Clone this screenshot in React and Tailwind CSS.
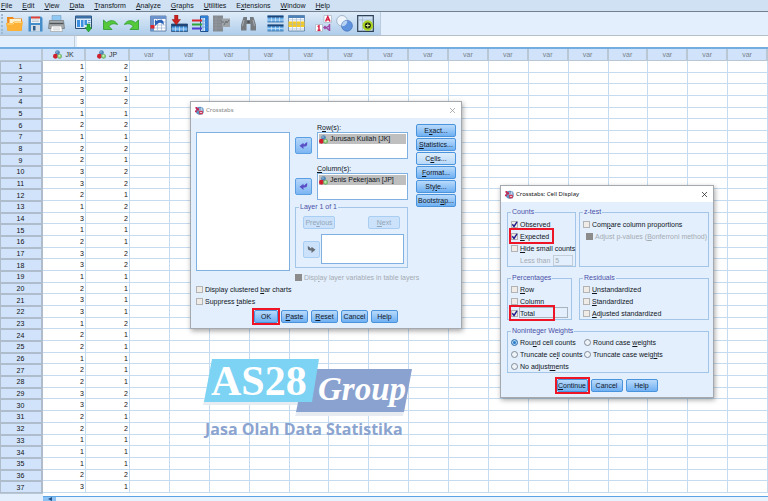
import React, { useState } from "react";
import { X } from "lucide-react";

const MENUS = [
  "&File", "&Edit", "&View", "&Data", "&Transform", "&Analyze",
  "&Graphs", "&Utilities", "E&xtensions", "&Window", "&Help",
];

// [JK, JP] for every case
const CASES = [
  [1, 2], [2, 1], [3, 2], [3, 2], [1, 1], [2, 2], [1, 1], [2, 2], [2, 1], [3, 2],
  [3, 2], [2, 1], [1, 2], [3, 2], [1, 1], [2, 1], [3, 2], [3, 2], [1, 1], [2, 1],
  [3, 1], [3, 1], [1, 2], [2, 1], [2, 1], [1, 1], [2, 1], [2, 1], [3, 2], [3, 2],
  [2, 1], [2, 2], [1, 1], [1, 1], [1, 1], [2, 2], [3, 1],
];

const EMPTY_VARS = Array.from({ length: 16 }, (_, i) => i);

// "&" marks the letter that gets the keyboard underline
function Mnemonic({ text }) {
  const at = text.indexOf("&");
  if (at < 0) return <span>{text}</span>;
  return (
    <span className="whitespace-nowrap">
      {text.slice(0, at)}
      <span className="underline">{text[at + 1]}</span>
      {text.slice(at + 2)}
    </span>
  );
}

function NominalIcon() {
  return (
    <svg viewBox="0 0 10 10" className="w-[9px] h-[9px] shrink-0">
      <circle cx="5" cy="2.8" r="2.6" fill="#4f86b8" />
      <circle cx="2.7" cy="7" r="2.7" fill="#d0202e" />
      <circle cx="7.3" cy="7" r="2.4" fill="#8fd07c" stroke="#4c9440" strokeWidth=".5" />
      <circle cx="4.4" cy="2.2" r=".9" fill="#a9cbe6" />
      <circle cx="7" cy="6.5" r="1" fill="#d4f5c6" />
    </svg>
  );
}

function AppIcon() {
  return (
    <svg viewBox="0 0 10 10" className="w-[9px] h-[9px] shrink-0">
      <circle cx="5.4" cy="5.2" r="4.5" fill="#5f93c4" />
      <path d="M3.5 3.4h6M4 5.2h5.600M7.200 1.500v4" stroke="#dcebf8" strokeWidth=".7" />
      <path d="M.5 1h2v2h-2zM1.500 2.500h3v2.500h-3zM0 5h2v2H0z" fill="#cc2452" />
      <path d="M4.600 5.300h4V9.200h-4z" fill="#cf3450" />
      <path d="M5.500 7.200h2.300" stroke="#fff" strokeWidth=".8" />
    </svg>
  );
}

const TOOL_GROUPS = [
  [
    {
      name: "Open",
      art: (
        <>
          <path d="M1 2h6l1 1.500h8v12H1.500z" fill="#ee8a18" />
          <path d="M3.500 4h11.500v6H3.500z" fill="#fff3cf" />
          <path d="M0 8h6.500l1.500-1.500H17L15.500 16h-14z" fill="#fdb235" />
          <path d="M1.500 9h5.500l1.500-1.500h7" stroke="#ffdf95" fill="none" strokeWidth=".9" />
        </>
      ),
    },
    {
      name: "Save",
      art: (
        <>
          <path d="M1.500 1.500h12.500l1.500 1.500v13.500h-14z" fill="#458dc8" />
          <path d="M4 1.500h9v6.500H4z" fill="#eef2f6" />
          <path d="M4 1.500h9v2H4z" fill="#dd4038" />
          <path d="M5 5h7M5 6.500h7" stroke="#a9b6c2" strokeWidth=".6" />
          <path d="M4 10h9v6.500H4z" fill="#d3dce5" />
          <path d="M6 11h2.500v4.500H6z" fill="#2f5f8c" />
        </>
      ),
    },
    {
      name: "Print",
      art: (
        <>
          <path d="M4 .500h9V7H4z" fill="#8fc8f2" stroke="#6c93b4" strokeWidth=".5" />
          <path d="M1.500 5.500h14l1 8H.500z" fill="#a6aaae" stroke="#6d7276" strokeWidth=".7" />
          <path d="M1.500 8.500h14" stroke="#4f5458" strokeWidth="1.400" />
          <path d="M3.500 11h10l1 5.500h-12z" fill="#fcfcfc" stroke="#888" strokeWidth=".5" />
          <path d="M5 13h7M5 14.800h7" stroke="#b5b9bd" strokeWidth=".6" />
        </>
      ),
    },
  ],
  [
    {
      name: "Recall dialog",
      art: (
        <>
          <path d="M.500 1h16v12.500H.500z" fill="#dcebf8" stroke="#2c4e75" strokeWidth="1" />
          <path d="M.500 1h16v2.500H.500z" fill="#3b6ea5" />
          <path d="M2 5h3v7H2zM6 5h2.500v7H6zM9.500 5H12v5H9.500z" fill="#3d8fe0" />
          <path d="M13 5.500h2.500M13 7.500h2.500" stroke="#6a9fd0" />
          <path d="M12 9h3v3.500h2L13.500 17 10 12.500h2z" fill="#2fb536" stroke="#1c7d24" strokeWidth=".5" />
        </>
      ),
    },
  ],
  [
    {
      name: "Undo",
      art: <path d="M1.500 5v9.500H10L7 11.500C8.500 9 11.500 8 15.500 9.500 13.500 5 8 4.500 4.500 7.700z" fill="#55c93a" stroke="#2a9a2a" strokeWidth=".8" />,
    },
    {
      name: "Redo",
      art: <path d="M15.500 5v9.500H7L10 11.500C8.500 9 5.500 8 1.500 9.500 3.500 5 9 4.500 12.500 7.700z" fill="#55c93a" stroke="#2a9a2a" strokeWidth=".8" />,
    },
  ],
  [
    {
      name: "Go to case",
      art: (
        <>
          <path d="M.500 1h15.500v15H.500z" fill="#fff" stroke="#4a6a98" strokeWidth=".8" />
          <path d="M.500 1h15.500v3H.500zM.500 4h3.500v12H.500z" fill="#6c93cc" />
          <path d="M4 7h12M4 10h12M4 13h12M7.500 4v12M11.500 4v12" stroke="#9fb4d2" strokeWidth=".7" />
          <path d="M.500 10h4v3.500h-4z" fill="#d9252b" />
          <path d="M5 4.500V11l2-1.700c2-2.300 5-2.300 6.500.700C15 5 10 3.500 6.800 6z" fill="#2b62b5" />
        </>
      ),
    },
    {
      name: "Go to variable",
      art: (
        <>
          <path d="M.500 9h16v7.500h-16z" fill="#4f9be0" stroke="#2c4e75" strokeWidth=".8" />
          <path d="M.500 9h16v2.500h-16z" fill="#1f4577" />
          <path d="M.500 14h16M4.500 11.500v5M8.500 11.500v5M12.500 11.500v5" stroke="#cfe6fa" strokeWidth=".7" />
          <path d="M3.500 0h3.500v4.500h2.500L5.200 10 1 4.500h2.500z" fill="#c9221f" stroke="#861412" strokeWidth=".4" />
        </>
      ),
    },
    {
      name: "Variables",
      art: (
        <>
          <path d="M8.500 1H16v15.500H8.500z" fill="#cfe6fa" stroke="#1f4f8c" strokeWidth="1" />
          <path d="M8.500 1H16v2H8.500zM13 3h3v13h-3z" fill="#2f7fd6" />
          <path d="M8.500 6H16M8.500 9H16M8.500 12H16M11 3v13" stroke="#5a94d0" strokeWidth=".7" />
          <path d="M0 5.500h10" stroke="#d9252b" strokeWidth="2" />
          <path d="M0 9.500h10" stroke="#33a63a" strokeWidth="2" />
          <path d="M0 13.500h10" stroke="#4b3fd1" strokeWidth="2" />
        </>
      ),
    },
    {
      name: "Run descriptive statistics",
      art: (
        <>
          <path d="M0 .500h10v16H0z" fill="#858a90" />
          <path d="M0 4h10M0 7h10M0 10h10M0 13h10M3 1v15" stroke="#9a9fa5" strokeWidth=".6" />
          <path d="M9 3.500h8V12H9z" fill="#9ea3a8" />
          <path d="M11 10l2-4 1 2 2-3M8 7h3" stroke="#6c7176" fill="none" />
        </>
      ),
    },
  ],
  [
    {
      name: "Find",
      art: (
        <>
          <path d="M3.500 2h3.500v3h3V2h3.500l2.500 8v5.500h-5.500V9h-4v6.500H1V10z" fill="#767b80" />
          <path d="M4 5l-1.500 6M13 5l1.500 6" stroke="#a9afb4" />
          <circle cx="8.500" cy="7" r="1.300" fill="#4d5256" />
        </>
      ),
    },
  ],
  [
    {
      name: "Split file",
      art: (
        <>
          <path d="M.500 .500h16v6.500H.500zM.500 9.500h16V16H.500z" fill="#63abe8" />
          <path d="M.500 1.500h16M.500 10.500h16" stroke="#1f4577" strokeWidth="2" />
          <path d="M.500 5h16M.500 13.500h16M4.500 2.500V7M8.500 2.500V7M12.500 2.500V7M4.500 11.500v5M8.500 11.500v5M12.500 11.500v5" stroke="#d6ebfc" strokeWidth=".7" />
          <path d="M.500 7h16M.500 16h16" stroke="#36699e" strokeWidth=".8" />
        </>
      ),
    },
    {
      name: "Select cases",
      art: (
        <>
          <path d="M.500 .500h16v15.500H.500z" fill="#f3f8fd" stroke="#54779d" strokeWidth=".8" />
          <path d="M.500 .500h16V3H.500z" fill="#4d81b8" />
          <path d="M.500 6.500h16V12H.500z" fill="#f7ca1f" />
          <path d="M.500 9.200h16M.500 14h16M.500 4.800h16M4.500 3v13M8.500 3v13M12.500 3v13" stroke="#a8bbcf" strokeWidth=".6" />
        </>
      ),
    },
  ],
  [
    {
      name: "Value labels",
      art: (
        <>
          <path d="M9 .500h7.500v7H9zM.500 9.500h7v7h-7z" fill="#fff" stroke="#9da9b8" strokeWidth=".6" />
          <path d="M10.600 6.500l2.200-5 2.200 5M11.500 4.900h2.600" stroke="#d81f45" strokeWidth="1.400" fill="none" />
          <path d="M2.600 11.700L4 10.800v4.500M2.500 15.300h3" stroke="#d81f45" strokeWidth="1.400" fill="none" />
          <path d="M14.500 9v7M14.500 10.500l-3 2h-2M11 12.500l3 2.500M10.500 11L9 12.500l1.500 1.500" stroke="#a04aa8" strokeWidth="1.500" fill="none" />
        </>
      ),
    },
    {
      name: "Use variable sets",
      art: (
        <>
          <circle cx="6" cy="5.800" r="5.300" fill="#eef5fc" stroke="#8b9fb8" strokeWidth=".7" />
          <circle cx="11" cy="10.800" r="5.400" fill="#5f93de" stroke="#3f6fb8" strokeWidth=".7" />
          <path d="M11.300 5.500A5.300 5.300 0 0 1 5.700 11.300 5.400 5.400 0 0 1 11.300 5.500z" fill="#b9d3f3" />
        </>
      ),
    },
    {
      name: "Show all variables",
      art: (
        <>
          <path d="M.700 .700h15.600v15.600H.700z" fill="#cfe2f5" stroke="#2f4156" strokeWidth="1.200" />
          <path d="M.700 5h15.600M5.500 .700v15.600" stroke="#8aa2bb" strokeWidth=".5" />
          <circle cx="10.800" cy="10.500" r="5.300" fill="#a9d320" />
          <circle cx="10.800" cy="10.500" r="3" fill="#1c2410" />
          <path d="M10.800 8.500v4M8.800 10.500h4" stroke="#d9f08a" strokeWidth="1" />
        </>
      ),
    },
  ],
];

function DialogButton({ text, className = "", disabled = false }) {
  return (
    <button
      type="button"
      disabled={disabled}
      className={`h-[13px] rounded-[2px] border text-center leading-[10px] whitespace-nowrap ${
        disabled
          ? "border-[#a9cef3] bg-[#cbe2fa] text-[#93a5b8]"
          : "border-[#4a94de] bg-gradient-to-b from-[#b9dafb] to-[#6fb0f2] text-[#10161f]"
      } ${className}`}
    >
      <Mnemonic text={text} />
    </button>
  );
}

function CheckBox({ label, defaultChecked = false, disabled = false, className = "" }) {
  return (
    <label className={`flex h-[12px] items-center gap-[2px] ${disabled ? "text-[#a3abb3]" : ""} ${className}`}>
      <span className="grid shrink-0">
        <input
          type="checkbox"
          defaultChecked={defaultChecked}
          disabled={disabled}
          className="peer [grid-area:1/1] appearance-none w-[7px] h-[7px] border border-[#b3b3b3] bg-[#efece8] disabled:border-[#8c8c8c] disabled:bg-[#8c8c8c]"
        />
        <svg viewBox="0 0 7 7" className="[grid-area:1/1] w-[7px] h-[7px] pointer-events-none invisible peer-checked:visible">
          <path d="M1.300 3.300l1.700 2.200L6 .800" fill="none" stroke="#1c1c8c" strokeWidth="1.400" />
        </svg>
      </span>
      <Mnemonic text={label} />
    </label>
  );
}

function Radio({ label, defaultChecked = false }) {
  return (
    <label className="flex h-[12px] items-center gap-[2px]">
      <input
        type="radio"
        name="weights"
        defaultChecked={defaultChecked}
        className="appearance-none shrink-0 w-[7px] h-[7px] rounded-full border border-[#7f8b97] bg-[#eef3f8] checked:border-[#4a80b4] checked:bg-[#2b7cc9] checked:shadow-[inset_0_0_0_1px_#b5d8f5]"
      />
      <Mnemonic text={label} />
    </label>
  );
}

function Group({ title, className = "", children }) {
  return (
    <fieldset className={`min-w-0 border border-[#a3c5e8] px-[3px] ${className}`}>
      <legend className="px-px leading-[10px] text-[#4a4fa8]">{title}</legend>
      {children}
    </fieldset>
  );
}

function Highlight() {
  return <span className="absolute -inset-[2px] border-2 border-[#ee1526] pointer-events-none" />;
}

function Dialog({ title, active, className, onClose, children }) {
  return (
    <section
      role="dialog"
      aria-label={title}
      className={`absolute border border-[#a3a9af] bg-[#e3effc] shadow-[1px_2px_5px_rgba(0,0,0,0.35)] ${className}`}
    >
      <header className="flex h-[16px] items-center gap-[2px] bg-white pl-[4px] pr-[4px]">
        <AppIcon />
        <h2 className={`flex-1 font-['Noto_Sans','Open_Sans',sans-serif] text-[6px] ${active ? "text-[#111]" : "text-[#858585]"}`}>
          {title}
        </h2>
        <button type="button" aria-label="Close" onClick={onClose}>
          <X className={`w-[9px] h-[9px] ${active ? "text-[#222]" : "text-[#999]"}`} />
        </button>
      </header>
      {children}
    </section>
  );
}

function MoveButton({ disabled = false }) {
  return (
    <button
      type="button"
      aria-label="Move variable"
      disabled={disabled}
      className={`flex w-[17px] h-[17px] shrink-0 items-center justify-center rounded-[2px] border ${
        disabled ? "border-[#a9cef3] bg-[#cbe2fa]" : "border-[#5a9fe4] bg-gradient-to-b from-[#b5d6f9] to-[#7db6f2]"
      }`}
    >
      <svg viewBox="0 0 9 9" className="w-[9px] h-[9px]">
        {disabled ? (
          <path d="M.800 1v2q0 2.500 2.500 2.500H4.500V8L8.500 4.800 4.500 1.800V3.300H3.500Q2.800 3.300 2.800 2.300z" fill="#666d75" />
        ) : (
          <path d="M8.200 1v2q0 2.500-2.500 2.500H4.500V8L.500 4.800 4.500 1.800V3.300h1Q6.200 3.300 6.200 2.300z" fill="#5b4fc7" />
        )}
      </svg>
    </button>
  );
}

function VariableTarget({ label, variable }) {
  return (
    <div>
      <div className="pl-[22px] leading-[9px]"><Mnemonic text={label} /></div>
      <div className="flex items-center gap-[5px]">
        <MoveButton />
        <ul className="flex-1 h-[27px] border border-[#7fb0e2] bg-white p-px">
          <li className="flex items-center gap-[2px] h-[10px] bg-[#bfbfbf] leading-[10px] whitespace-nowrap">
            <NominalIcon />
            {variable}
          </li>
        </ul>
      </div>
    </div>
  );
}

function CrosstabsDialog({ onClose }) {
  return (
    <Dialog title="Crosstabs" className="left-[190px] top-[101px] w-[272px]" onClose={onClose}>
      <div className="px-[5px] pt-[5px] pb-[5px]">
        <div className="flex items-start gap-[5px]">
          <ul aria-label="Variables" className="w-[94px] h-[139px] mt-[9px] border border-[#7fb0e2] bg-white" />
          <div className="w-[113px]">
            <div className="flex flex-col gap-[5px]">
              <VariableTarget label="R&ow(s):" variable="Jurusan Kuliah [JK]" />
              <VariableTarget label="&Column(s):" variable="Jenis Pekerjaan [JP]" />
            </div>
            <Group title="Layer 1 of 1" className="mt-[2px]">
              <div className="flex justify-between px-[4px] pt-[4px]">
                <DialogButton text="Pre&vious" className="w-[32px]" disabled />
                <DialogButton text="&Next" className="w-[32px]" disabled />
              </div>
              <div className="flex items-center gap-px pl-[4px] pt-[5px] pb-[3px]">
                <MoveButton disabled />
                <ul aria-label="Layer variables" className="flex-1 h-[30px] border border-[#7fb0e2] bg-white" />
              </div>
            </Group>
            <CheckBox label="Disp&lay layer variables in table layers" className="mt-[3px]" disabled />
          </div>
          <div className="flex flex-1 flex-col gap-px pt-px pl-[3px]">
            <DialogButton text="E&xact..." />
            <DialogButton text="&Statistics..." />
            <DialogButton text="C&ells..." className="from-[#dcedfd] to-[#b9d9f9]" />
            <DialogButton text="&Format..." />
            <DialogButton text="Sty&le..." />
            <DialogButton text="Bootstr&ap..." />
          </div>
        </div>
        <CheckBox label="Display clustered &bar charts" />
        <CheckBox label="Suppress &tables" />
        <div className="flex justify-center gap-[3px] pt-[3px]">
          <span className="relative flex">
            <DialogButton text="OK" className="w-[24px]" />
            <Highlight />
          </span>
          <DialogButton text="&Paste" className="w-[27px]" />
          <DialogButton text="&Reset" className="w-[27px]" />
          <DialogButton text="Cancel" className="w-[27px]" />
          <DialogButton text="Help" className="w-[27px]" />
        </div>
      </div>
    </Dialog>
  );
}

function CellDisplayDialog({ onClose }) {
  return (
    <Dialog title="Crosstabs: Cell Display" className="left-[500px] top-[185px] w-[214px]" active onClose={onClose}>
      <div className="flex flex-col gap-[6px] pl-[6px] pr-[4px] pt-[5px] pb-[5px]">
        <div className="flex gap-[3px]">
          <Group title="Counts" className="w-[69px] shrink-0 pt-px">
            <CheckBox label="&Observed" defaultChecked />
            <div className="relative w-[41px]">
              <CheckBox label="&Expected" defaultChecked />
              <Highlight />
            </div>
            <CheckBox label="&Hide small counts" />
            <label className="flex h-[12px] items-center gap-[3px] pl-[9px] text-[#a3abb3] whitespace-nowrap">
              Less than
              <input defaultValue="5" disabled className="w-[20px] h-[11px] border border-[#c2cdd8] pl-px" />
            </label>
          </Group>
          <Group title="z-test" className="flex-1 pt-px">
            <CheckBox label="Com&pare column proportions" />
            <CheckBox label="Adjust p-values (&Bonferroni method)" className="pl-[3px]" disabled />
          </Group>
        </div>
        <div className="flex gap-[7px]">
          <Group title="Percentages" className="w-[65px] shrink-0">
            <CheckBox label="&Row" />
            <CheckBox label="&Column" />
            <div className="relative w-[42px]">
              <CheckBox label="&Total" defaultChecked />
              <span className="absolute left-[8px] top-0 w-[49px] h-[11px] border border-[#a9b4bf] pointer-events-none" />
              <Highlight />
            </div>
          </Group>
          <Group title="Residuals" className="flex-1">
            <CheckBox label="&Unstandardized" />
            <CheckBox label="&Standardized" />
            <CheckBox label="&Adjusted standardized" />
          </Group>
        </div>
        <Group title="Noninteger Weights">
          <div className="grid grid-cols-[73px_1fr]">
            <Radio label="Rou&nd cell counts" defaultChecked />
            <Radio label="Round case &weights" />
            <Radio label="Truncate ce&ll counts" />
            <Radio label="Truncate case weig&hts" />
            <Radio label="No adjust&ments" />
          </div>
        </Group>
        <div className="flex justify-center gap-[3px] pr-[2px]">
          <span className="relative flex">
            <DialogButton text="&Continue" className="w-[31px]" />
            <Highlight />
          </span>
          <DialogButton text="Cancel" className="w-[32px]" />
          <DialogButton text="Help" className="w-[32px]" />
        </div>
      </div>
    </Dialog>
  );
}

function Watermark() {
  return (
    <div className="absolute left-[203px] top-[358px] w-[210px] pointer-events-none">
      <svg viewBox="0 0 210 58" className="block w-full">
        <path d="M9 4h106l-9 43H0z" fill="#e6ecf1" />
        <path d="M106 15h102l-8 43H92z" fill="#e6ecf1" />
        <path d="M102 11h107l-8 43H93z" fill="#8aa2cf" />
        <path d="M9 1h107l-7 43H1z" fill="#7dd3f4" />
        <text x="8" y="37" fontFamily="'Liberation Serif', serif" fontWeight="700" fontSize="42" fill="#fff">AS28</text>
        <text x="115" y="42" fontFamily="'Liberation Serif', serif" fontWeight="700" fontStyle="italic" fontSize="33" fill="#fff">Group</text>
      </svg>
      <p className="pl-[2px] font-['Open_Sans','Noto_Sans',sans-serif] text-[16px] leading-[26px] font-bold text-[#8ba4cf] whitespace-nowrap">
        Jasa Olah Data Statistika
      </p>
    </div>
  );
}

function DataGrid() {
  return (
    <table className="w-full h-full table-fixed border-separate border-spacing-0">
      <colgroup>
        <col className="w-[43px]" />
        <col className="w-[43px]" />
        <col className="w-[44px]" />
      </colgroup>
      <thead>
        <tr className="h-[12px] bg-[#d0e3fb] text-[#7b838d]">
          <th className="border-b border-r-2 border-[#b9c6d4] p-0" />
          {["JK", "JP"].map((name) => (
            <th key={name} scope="col" className="border-b border-r-2 border-[#b9c6d4] p-0 font-normal text-[#333]">
              <span className="flex items-center justify-center gap-[3px]">
                <NominalIcon />
                {name}
              </span>
            </th>
          ))}
          {EMPTY_VARS.map((i) => (
            <th key={i} scope="col" className="border-b border-r-2 border-[#b9c6d4] p-0 font-normal">var</th>
          ))}
        </tr>
      </thead>
      <tbody>
        {CASES.map(([jk, jp], row) => (
          <tr key={row} className="text-right text-[#111]">
            <th scope="row" className="border border-[#aebccb] border-r-2 bg-[#d0e3fb] p-0 pr-px text-center font-normal">
              {row + 1}
            </th>
            <td className="border-b border-r border-[#c5dcf0] p-0 pr-px">{jk}</td>
            <td className="border-b border-r border-[#c5dcf0] p-0 pr-px">{jp}</td>
            {EMPTY_VARS.map((i) => (
              <td key={i} className="border-b border-r border-[#c5dcf0] p-0" />
            ))}
          </tr>
        ))}
      </tbody>
    </table>
  );
}

export default function App() {
  const [showCrosstabs, setShowCrosstabs] = useState(true);
  const [showCells, setShowCells] = useState(true);

  return (
    <main className="relative flex flex-col h-screen overflow-hidden bg-white font-['Liberation_Sans',Arial,sans-serif] text-[7px] leading-[9px] text-[#10151c]">
      <nav className="flex items-center gap-[10px] h-[12px] shrink-0 border-b border-[#72808f] bg-[#cfe1f2] pl-px">
        {MENUS.map((menu) => (
          <button key={menu} type="button"><Mnemonic text={menu} /></button>
        ))}
      </nav>

      <div className="flex h-[24px] shrink-0 border-b border-[#b4bfca] bg-[#e3effc]">
        <div className="flex items-center gap-[10px] border-r border-[#b9cbdd] bg-gradient-to-b from-[#dfecf9] to-[#afcdea] pr-[6px]">
          <div className="-mr-[7px] ml-px h-[20px] border-l-2 border-dotted border-[#9fb9d3]" />
          {TOOL_GROUPS.map((group) => (
            <div key={group[0].name} className="flex gap-[4px]">
              {group.map((tool) => (
                <button key={tool.name} type="button" aria-label={tool.name}>
                  <svg viewBox="0 0 17 17" className="block w-[17px] h-[17px]">{tool.art}</svg>
                </button>
              ))}
            </div>
          ))}
        </div>
      </div>

      <div className="flex h-[13px] shrink-0 gap-[2px] border-b-2 border-[#74ade0] bg-[#e3effc]">
        <div className="w-[75px] border-r border-[#c3cdd8]" />
        <input aria-label="Cell value" className="min-w-0 flex-1 bg-white" />
      </div>

      <div className="flex-1 min-h-0">
        <DataGrid />
      </div>
      <footer className="flex h-[8px] shrink-0">
        <div className="w-[43px] border-t border-[#b9c6d4] bg-[#e3effc]" />
        <div className="flex flex-1 flex-col">
          <div className="h-[3px]" />
          <div className="flex h-[5px] border-t border-[#5ba3e4] bg-[#e9f3fd]">
            <button type="button" aria-label="Scroll left" className="flex w-[13px] items-center justify-center bg-[#8cc1f4]">
              <svg viewBox="0 0 4 4" className="w-[4px] h-[4px]"><path d="M4 0v4L0 2z" fill="#1f4f86" /></svg>
            </button>
          </div>
        </div>
      </footer>

      <Watermark />
      {showCrosstabs && <CrosstabsDialog onClose={() => setShowCrosstabs(false)} />}
      {showCells && <CellDisplayDialog onClose={() => setShowCells(false)} />}
    </main>
  );
}
